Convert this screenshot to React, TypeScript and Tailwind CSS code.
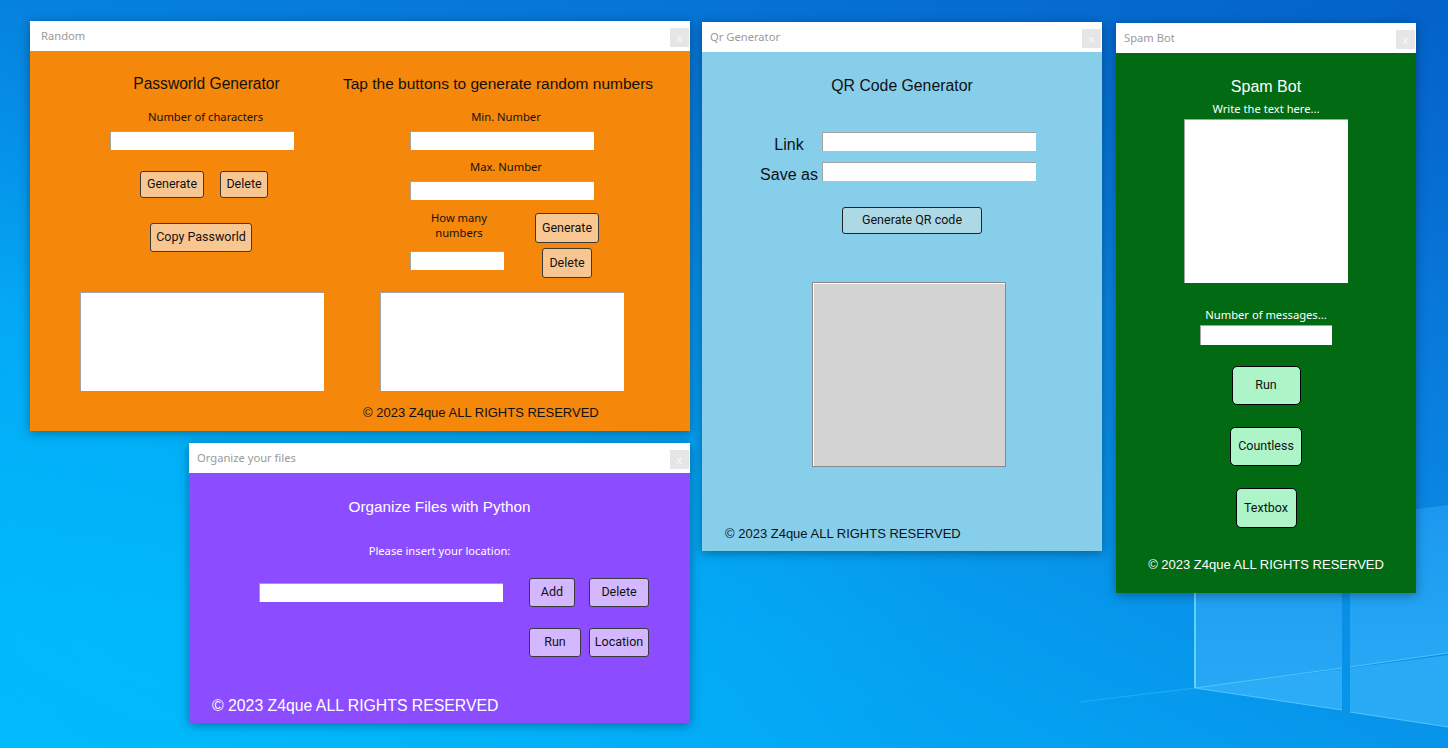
import React from "react";

const ARIAL = "font-['Liberation_Sans',Arial,sans-serif]";
const UI = "font-['Noto_Sans',sans-serif]";
const BTN = "font-['Roboto',sans-serif]";

function Win({
  title,
  className,
  bodyClass,
  titlePad,
  children,
}: {
  title: string;
  className: string;
  bodyClass: string;
  titlePad: string;
  children?: React.ReactNode;
}) {
  return (
    <div className={`absolute flex flex-col shadow-[0_2px_10px_rgba(0,0,0,0.35)] ${className}`}>
      <div className={`h-[30px] shrink-0 bg-white flex items-center justify-between pr-[1px] ${titlePad}`}>
        <span className={`${UI} text-[11.2px] text-[#9a9a9a] leading-[16px]`}>{title}</span>
        <div className={`mt-[3px] w-[19px] h-[19px] bg-[#e6e6e6] flex items-center justify-center text-[10px] leading-[10px] text-[#fafafa] ${UI}`}>
          x
        </div>
      </div>
      <div className={`flex-1 flex flex-col ${bodyClass}`}>{children}</div>
    </div>
  );
}

function Entry({ className }: { className: string }) {
  return <div className={`bg-white border-t border-l border-[#a3a3a3] shrink-0 ${className}`} />;
}

function Btn({ className, children }: { className: string; children: React.ReactNode }) {
  return (
    <div
      className={`shrink-0 flex items-center justify-center border border-[#3a3a3a] text-[12.5px] text-[#111] ${BTN} ${className}`}
    >
      {children}
    </div>
  );
}

function Desktop() {
  return (
    <svg
      className="absolute inset-0 w-full h-full"
      viewBox="0 0 1448 748"
      preserveAspectRatio="none"
    >
      <defs>
        <linearGradient id="bg" x1="0" y1="1" x2="1" y2="0">
          <stop offset="0" stopColor="#00b8fc" />
          <stop offset="0.35" stopColor="#04a2f2" />
          <stop offset="0.65" stopColor="#0a86e2" />
          <stop offset="1" stopColor="#0563cb" />
        </linearGradient>
        <radialGradient id="glow" cx="0.12" cy="0.85" r="0.55">
          <stop offset="0" stopColor="#00c0ff" stopOpacity="0.55" />
          <stop offset="1" stopColor="#00c0ff" stopOpacity="0" />
        </radialGradient>
        <linearGradient id="top" x1="0" y1="0" x2="0" y2="1">
          <stop offset="0" stopColor="#0060c8" stopOpacity="0.35" />
          <stop offset="0.4" stopColor="#0060c8" stopOpacity="0" />
        </linearGradient>
        <linearGradient id="pane" x1="0" y1="0" x2="0" y2="1">
          <stop offset="0" stopColor="#1b98ee" />
          <stop offset="1" stopColor="#27a8f5" />
        </linearGradient>
      </defs>
      <rect width="1448" height="748" fill="url(#bg)" />
      <rect width="1448" height="748" fill="url(#glow)" />
      <rect width="1448" height="748" fill="url(#top)" />
      {/* windows logo panes */}
      <polygon points="1195,540 1342,520 1342,668 1195,688" fill="url(#pane)" />
      <polygon points="1195,688 1342,669 1342,710" fill="#2cacf6" />
      <polygon points="1350,518 1448,505 1448,653 1350,667" fill="url(#pane)" />
      <polygon points="1350,668 1448,655 1448,727 1350,712" fill="#29aaf5" />
      <line x1="1195" y1="540" x2="1195" y2="688" stroke="#7de6ff" strokeWidth="1.5" />
      <line x1="1195" y1="688" x2="1342" y2="668" stroke="#5fd0ff" strokeWidth="1" strokeOpacity="0.8" />
      <line x1="1195" y1="688" x2="1342" y2="710" stroke="#5fd0ff" strokeWidth="1" strokeOpacity="0.8" />
      <line x1="1350" y1="667" x2="1448" y2="653" stroke="#5fd0ff" strokeWidth="1" strokeOpacity="0.8" />
      <line x1="1350" y1="712" x2="1448" y2="727" stroke="#5fd0ff" strokeWidth="1" strokeOpacity="0.8" />
      <line x1="1080" y1="702" x2="1195" y2="688" stroke="#4fc8ff" strokeWidth="1" strokeOpacity="0.4" />
    </svg>
  );
}

export default function App() {
  return (
    <div className="relative w-[1448px] h-[748px] overflow-hidden">
      <Desktop />

      {/* Random */}
      <Win title="Random" titlePad="pl-[11px]" className="left-[30px] top-[21px] w-[660px] h-[410px]" bodyClass="bg-[#f5870a]">
        <div className="flex pl-[50px] gap-[56px]">
          <div className="w-[244px] flex flex-col items-center">
            <div className={`mt-[24px] h-[18px] leading-[18px] text-[15.6px] text-[#111] whitespace-nowrap ml-[9px] ${ARIAL}`}>
              Passworld Generator
            </div>
            <div className={`mt-[16px] leading-[16px] text-[11.2px] text-[#111] whitespace-nowrap ml-[7px] ${UI}`}>
              Number of characters
            </div>
            <Entry className="mt-[6px] w-[184px] h-[19px]" />
            <div className="mt-[21px] flex gap-[16px] ml-[4px]">
              <Btn className="w-[64px] h-[27px] bg-[#f8c791] rounded-[3px]">Generate</Btn>
              <Btn className="w-[48px] h-[27px] bg-[#f8c791] rounded-[3px]">Delete</Btn>
            </div>
            <Btn className="mt-[25px] mr-[2px] w-[102px] h-[29px] bg-[#f8c791] rounded-[3px]">Copy Passworld</Btn>
            <Entry className="mt-[40px] w-[244px] h-[99px]" />
          </div>
          <div className="w-[244px] flex flex-col items-center">
            <div className={`mt-[24px] h-[18px] leading-[18px] text-[15.5px] text-[#111] whitespace-nowrap mr-[8px] ${ARIAL}`}>
              Tap the buttons to generate random numbers
            </div>
            <div className={`mt-[16px] leading-[16px] text-[11.2px] text-[#111] whitespace-nowrap ml-[8px] ${UI}`}>
              Min. Number
            </div>
            <Entry className="mt-[6px] w-[184px] h-[19px]" />
            <div className={`mt-[9px] leading-[16px] text-[11.2px] text-[#111] whitespace-nowrap ml-[8px] ${UI}`}>
              Max. Number
            </div>
            <Entry className="mt-[6px] w-[184px] h-[19px]" />
            <div className="mt-[10px] self-stretch flex items-start">
              <div className="ml-[30px] w-[94px] flex flex-col items-center">
                <div className={`ml-[4px] leading-[15px] text-[11.2px] text-[#111] text-center ${UI}`}>
                  How many
                  <br />
                  numbers
                </div>
                <Entry className="mt-[11px] w-[94px] h-[19px]" />
              </div>
              <div className="ml-[31px] w-[64px] flex flex-col items-center">
                <Btn className="mt-[3px] w-[64px] h-[30px] bg-[#f8c791] rounded-[3px]">Generate</Btn>
                <Btn className="mt-[5px] w-[50px] h-[30px] bg-[#f8c791] rounded-[3px]">Delete</Btn>
              </div>
            </div>
            <Entry className="mt-[14px] w-[244px] h-[99px]" />
          </div>
        </div>
        <div className={`mt-[14px] pl-[333px] leading-[16px] text-[13px] text-[#111] whitespace-nowrap ${ARIAL}`}>
          © 2023 Z4que ALL RIGHTS RESERVED
        </div>
      </Win>

      {/* Organize your files */}
      <Win title="Organize your files" titlePad="pl-[8px]" className="left-[189px] top-[443px] w-[501px] h-[280px]" bodyClass="bg-[#8b4dff] items-center">
        <div className={`mt-[25px] h-[18px] leading-[18px] text-[15.3px] text-white whitespace-nowrap ${ARIAL}`}>
          Organize Files with Python
        </div>
        <div className={`mt-[27px] leading-[16px] text-[11.2px] text-white whitespace-nowrap ${UI}`}>
          Please insert your location:
        </div>
        <div className="mt-[19px] self-stretch flex items-start pl-[70px]">
          <Entry className="mt-[5px] w-[244px] h-[19px]" />
          <Btn className="ml-[26px] w-[46px] h-[29px] bg-[#d4b8ff] rounded-[3px]">Add</Btn>
          <Btn className="ml-[14px] w-[60px] h-[29px] bg-[#d4b8ff] rounded-[3px]">Delete</Btn>
        </div>
        <div className="mt-[21px] self-stretch flex items-start pl-[340px]">
          <Btn className="w-[52px] h-[29px] bg-[#d4b8ff] rounded-[3px]">Run</Btn>
          <Btn className="ml-[8px] w-[60px] h-[29px] bg-[#d4b8ff] rounded-[3px]">Location</Btn>
        </div>
        <div className={`mt-[40px] self-start pl-[23px] leading-[18px] text-[15.8px] text-white whitespace-nowrap ${ARIAL}`}>
          © 2023 Z4que ALL RIGHTS RESERVED
        </div>
      </Win>

      {/* Qr Generator */}
      <Win title="Qr Generator" titlePad="pl-[8px]" className="left-[702px] top-[22px] w-[400px] h-[529px]" bodyClass="bg-[#87ceeb] items-center">
        <div className={`mt-[25px] h-[18px] leading-[18px] text-[15.8px] text-[#111] whitespace-nowrap ${ARIAL}`}>
          QR Code Generator
        </div>
        <div className="mt-[37px] self-stretch flex items-start pl-[56px]">
          <div className={`mt-[3px] w-[62px] text-center leading-[19px] text-[16px] text-[#111] whitespace-nowrap ${ARIAL}`}>Link</div>
          <Entry className="ml-[2px] w-[214px] h-[19px]" />
        </div>
        <div className="mt-[8px] self-stretch flex items-start pl-[56px]">
          <div className={`mt-[3px] w-[62px] text-center leading-[19px] text-[16px] text-[#111] whitespace-nowrap ${ARIAL}`}>Save as</div>
          <Entry className="ml-[2px] w-[214px] h-[19px]" />
        </div>
        <Btn className="mt-[23px] ml-[20px] w-[140px] h-[27px] bg-[#add8e6] rounded-[3px] border-[#222]">Generate QR code</Btn>
        <div className="mt-[48px] ml-[14px] w-[194px] h-[185px] bg-[#d3d3d3] border border-[#8a8a8a] shadow-[inset_1px_1px_0_#ffffff]" />
        <div className={`mt-[59px] self-start pl-[23px] leading-[16px] text-[13px] text-[#111] whitespace-nowrap ${ARIAL}`}>
          © 2023 Z4que ALL RIGHTS RESERVED
        </div>
      </Win>

      {/* Spam Bot */}
      <Win title="Spam Bot" titlePad="pl-[8px]" className="left-[1116px] top-[23px] w-[300px] h-[570px]" bodyClass="bg-[#026a13] items-center">
        <div className={`mt-[25px] h-[18px] leading-[18px] text-[16px] text-white whitespace-nowrap ${ARIAL}`}>Spam Bot</div>
        <div className={`mt-[5px] leading-[16px] text-[11.2px] text-white whitespace-nowrap ${UI}`}>Write the text here...</div>
        <Entry className="mt-[2px] w-[164px] h-[164px]" />
        <div className={`mt-[24px] leading-[16px] text-[11.2px] text-white whitespace-nowrap ${UI}`}>Number of messages...</div>
        <Entry className="mt-[2px] w-[132px] h-[20px]" />
        <Btn className="mt-[21px] w-[69px] h-[39px] bg-[#adf5c9] rounded-[5px] border-black">Run</Btn>
        <Btn className="mt-[22px] w-[72px] h-[39px] bg-[#adf5c9] rounded-[5px] border-black">Countless</Btn>
        <Btn className="mt-[22px] w-[61px] h-[40px] bg-[#adf5c9] rounded-[5px] border-black">Textbox</Btn>
        <div className={`mt-[29px] leading-[16px] text-[13px] text-white whitespace-nowrap ${ARIAL}`}>
          © 2023 Z4que ALL RIGHTS RESERVED
        </div>
      </Win>
    </div>
  );
}
